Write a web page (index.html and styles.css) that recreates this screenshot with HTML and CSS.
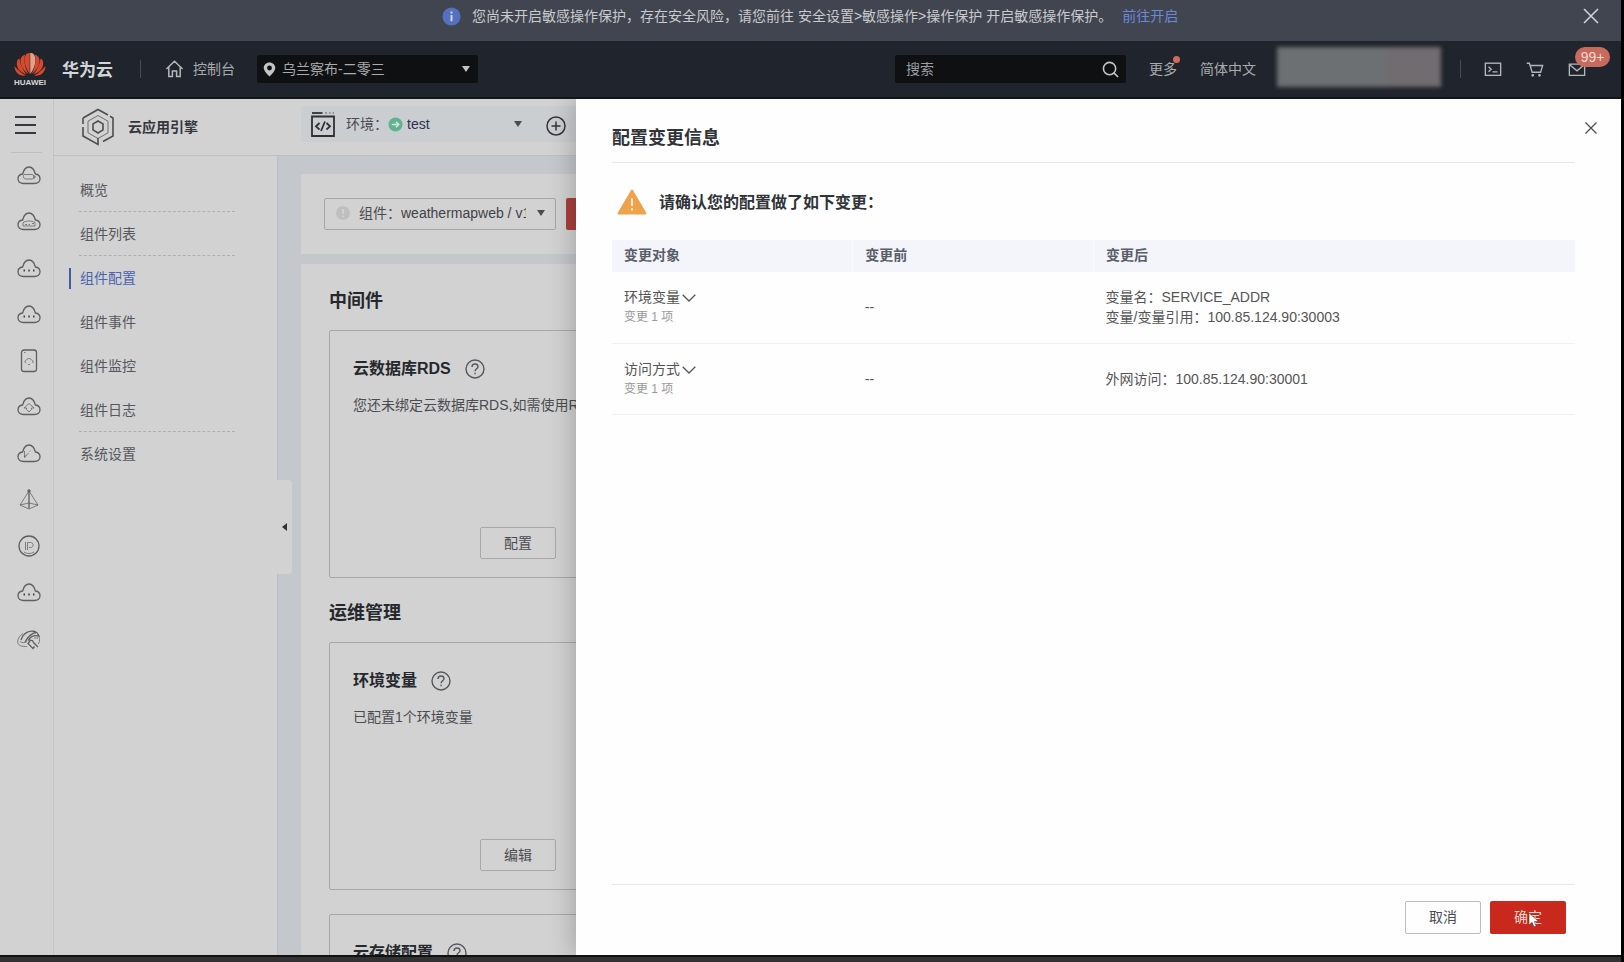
FILE: index.html
```html
<!DOCTYPE html>
<html lang="zh-CN">
<head>
<meta charset="utf-8">
<title>云应用引擎</title>
<link rel="stylesheet" href="styles.css">
</head>
<body>
<svg class="defs" aria-hidden="true">
  <symbol id="cloud" viewBox="0 0 26 22"><path d="M7.5 18.5h11c3.2 0 5.5-2 5.5-4.7 0-2.600-1.900-4.500-4.600-4.800C18.500 5.200 16.600 2 13 2S7.500 5.200 6.600 9C3.900 9.300 2 11.200 2 13.800c0 2.700 2.300 4.700 5.500 4.700z"/></symbol>
  <symbol id="help" viewBox="0 0 20 20"><circle cx="10" cy="10" r="9"/><path d="M7 8c0-1.900 1.300-3 3-3s3 1.100 3 2.700c0 2-2.900 2.200-2.900 4.500M10.100 13.700v1.600"/></symbol>
</svg>
<div class="page">
  <div class="notice">
    <svg class="notice-icon" viewBox="0 0 20 20"><circle cx="10" cy="10" r="9.500" fill="#5670c0"/><path d="M10 8.500v6.500M10 4.700v2.100" stroke="#d5daea" stroke-width="2"/></svg>
    <span>您尚未开启敏感操作保护，存在安全风险，请您前往 安全设置&gt;敏感操作&gt;操作保护 开启敏感操作保护。</span>
    <a href="#">前往开启</a>
    <button class="notice-close" aria-label="关闭提示"><svg viewBox="0 0 16 16"><path d="M1 1l14 14M15 1L1 15"/></svg></button>
  </div>

  <header class="topbar">
    <svg class="logo" viewBox="0 0 32 34">
      <g fill="#d5492f">
        <path d="M15.700 22C11 16 9 7 12 2.500 13.500.8 15.500.8 15.800 1z"/>
        <path d="M16.300 22C21 16 23 7 20 2.500 18.500.8 16.500.8 16.200 1z" fill="#e3a08a"/>
        <path d="M14.500 22C8 18 4.500 10 7.500 5 9 3.200 10.500 3 11 3c-1.500 7 .5 14 3.500 19z"/>
        <path d="M17.500 22c6.500-4 10-12 7-17C23 3.200 21.500 3 21 3c1.500 7-.5 14-3.500 19z"/>
        <path d="M13 22.500C5.500 20.500 1 14.500 3.500 8c.8-1 1.500-1.300 2-1.500C6 12.500 9 18.500 13 22.500z"/>
        <path d="M19 22.500c7.500-2 12-8 9.500-14.500-.8-1-1.500-1.300-2-1.500-.5 6-3.500 12-7.500 16z"/>
        <path d="M12 23.500C5.500 24.500.5 20.500.5 14c3 3.500 7 7.500 11.500 9.500z"/>
        <path d="M20 23.500c6.500 1 11.500-3 11.500-9.500-3 3.500-7 7.500-11.500 9.500z"/>
      </g>
      <text x="16" y="33" text-anchor="middle" class="logo-word">HUAWEI</text>
    </svg>
    <span class="brand">华为云</span>
    <span class="bar bar-brand"></span>
    <a class="console" href="#">
      <svg viewBox="0 0 20 20"><path d="M1.500 10L10 1.800l8.500 8.200M4 8v10h3.800v-6h4.400v6H16V8"/></svg>控制台
    </a>
    <div class="region">
      <svg class="pin" viewBox="0 0 14 16"><path fill-rule="evenodd" d="M7 .5C3.400.5.800 3.100.800 6.400.800 10 7 15.500 7 15.500S13.200 10 13.200 6.400C13.200 3.100 10.600.5 7 .5zM7 3.800a2.600 2.600 0 1 1 0 5.200 2.600 2.600 0 0 1 0-5.200z"/></svg>
      <select aria-label="区域"><option>乌兰察布-二零三</option></select>
      <span class="caret"></span>
    </div>
    <div class="search">
      <input type="text" placeholder="搜索" aria-label="搜索">
      <button aria-label="搜索"><svg viewBox="0 0 18 18"><circle cx="8" cy="8" r="6.500"/><path d="M12.600 12.600L17 17"/></svg></button>
    </div>
    <a class="more" href="#">更多<span class="dot"></span></a>
    <a class="lang" href="#">简体中文</a>
    <span class="account"></span>
    <span class="bar bar-tools"></span>
    <button class="tool" aria-label="命令行"><svg viewBox="0 0 20 18"><rect x="1.500" y="2" width="17" height="13.500"/><path d="M5 6l3 2.700-3 2.700M9.500 11.700H15"/></svg></button>
    <button class="tool" aria-label="购物车"><svg viewBox="0 0 20 18"><path d="M.8 2h3l3 10h9.400l2.300-7.500H4.600"/><circle cx="7.500" cy="15.500" r=".8"/><circle cx="15" cy="15.500" r=".8"/></svg></button>
    <button class="tool" aria-label="消息"><svg viewBox="0 0 20 18"><path d="M1.500 3h17v12.500h-17zM1.500 3.500l8.500 7 8.500-7"/></svg><span class="badge">99+</span></button>
  </header>

  <div class="body">
    <nav class="rail" aria-label="服务">
      <button class="menu" aria-label="菜单"><i></i><i></i><i></i></button>
      <div class="rail-list">
        <svg viewBox="0 0 26 22"><use href="#cloud"/><path class="thin" d="M8 9.500h8c2.500 0 2.500 4.500 0 4.500H9.500C7 14 7 9.500 8 9.500zM17 11h2v2h-2"/></svg>
        <svg viewBox="0 0 26 22"><use href="#cloud"/><path class="thin" d="M7 15v-3.500c3-2 9-2 12 0V15zM9 13.500h2M12.500 13.500h1.500M16 12.500h2"/></svg>
        <svg viewBox="0 0 26 22"><use href="#cloud"/><path class="dots" d="M7.500 12.500h1.500M12.300 12.500h1.500M17 12.500h1.500"/></svg>
        <svg viewBox="0 0 26 22"><use href="#cloud"/><path class="dots" d="M7.500 12.500h1.500M12.300 12.500h1.500M17 12.500h1.500"/></svg>
        <svg viewBox="0 0 26 22"><rect x="5.500" y="0" width="15" height="21.500" rx="2.500"/><path class="thin" d="M9.500 13c-1.500-2 .5-3 1-3 1-2 4-2 5 0 1 0 2.500 1.500 1 3M12 14.500h2M8 2.500h1.500"/></svg>
        <svg viewBox="0 0 26 22"><use href="#cloud"/><path class="thin" d="M13 7.500l5 4.500h-2.500v1.500L13 16l-2.500-2.500V12H8z"/></svg>
        <svg viewBox="0 0 26 22"><use href="#cloud"/><path class="thin" d="M8.500 8v6.500l4-4.500M13.500 8.500l1-1M8.500 14.500l1-2"/></svg>
        <svg viewBox="0 0 26 22"><path class="thin" d="M13 2L4 16l9 4 9-4zM4 16l9-2 9 2"/><path d="M13 2v17.500"/><circle cx="13" cy="2" r="1"/></svg>
        <svg viewBox="0 0 26 22"><circle cx="13" cy="11" r="10"/><path class="thin" d="M9.500 7v8M11.500 15V7.500h3c3.500 0 3.500 5 0 5H13M8 17c3 2 7 2 10 0"/></svg>
        <svg viewBox="0 0 26 22"><use href="#cloud"/><path class="dots" d="M7.500 12.500h1.500M12.300 12.500h1.500M17 12.500h1.500"/></svg>
        <svg viewBox="0 0 26 22"><path d="M5 12C7 5 13 2 19 3.500c3 1 3.500 3.500 4 4.500-4-1-8 0-10.500 4l4 .5 1 2 4.500 4.500M9 14c3-5 7-9 11-9.500M14 13l-2 2.500 5 5 1.500-2"/><path class="thin" d="M7 5.500C3 8 1 12 2 15.500c1.500 3 6 3 9 3M23 8.500c1 4 .5 6-1 7.500M4 13.500c2 1.500 5 1.500 7 0M18 10h4"/></svg>
      </div>
    </nav>

    <div class="workspace">
      <div class="titlebar">
        <svg class="engine" viewBox="0 0 34 38">
          <path d="M2 10l15-8.500 10 5.500M2 10v6M2 19v9l15 8.500V30M22 33.500l10-5.500V10l-3-1.700"/>
          <path class="thin" d="M17 7.500l10 5.700v11.600l-10 5.700-10-5.700V13.200z"/>
          <path d="M17 13l5 2.900v6L17 25l-5-3.100v-6z"/>
        </svg>
        <span class="product">云应用引擎</span>
        <div class="env">
          <svg class="env-icon" viewBox="0 0 24 26"><path d="M1 5.500h22V25H1z"/><path d="M1 2h10.500" /><path class="thin" d="M14 2h2M18 2h1.500M21.500 2H23"/><path d="M8.500 12L5 15.300l3.500 3.200M15.500 12l3.500 3.300-3.500 3.200M14 10.500l-4 9.500"/></svg>
          <label for="env">环境：</label>
          <svg class="ok" viewBox="0 0 16 16"><circle cx="8" cy="8" r="7.500" fill="#5fb391"/><path d="M4 8h7.500M8.500 5l3 3-3 3" stroke="#d7e8e0" fill="none" stroke-width="1.500"/></svg>
          <select id="env"><option>test</option></select>
          <span class="caret"></span>
          <button class="add" aria-label="新建环境"><svg viewBox="0 0 20 20"><circle cx="10" cy="10" r="9"/><path d="M10 5.500v9M5.500 10h9"/></svg></button>
        </div>
      </div>

      <div class="columns">
        <nav class="side" aria-label="云应用引擎">
          <a href="#">概览</a>
          <hr>
          <a href="#">组件列表</a>
          <hr>
          <a href="#" class="active">组件配置</a>
          <a href="#">组件事件</a>
          <a href="#">组件监控</a>
          <a href="#">组件日志</a>
          <hr>
          <a href="#">系统设置</a>
          <button class="fold" aria-label="收起"></button>
        </nav>

        <main class="content">
          <section class="panel picker-panel">
            <div class="picker">
              <svg class="idle" viewBox="0 0 14 14"><circle cx="7" cy="7" r="7" fill="#bfbfbf"/><path d="M7 3v5M7 9.500v1.500" stroke="#d8d8d8" stroke-width="1.500"/></svg>
              <label for="component">组件：</label>
              <select id="component"><option>weathermapweb / v1</option></select>
              <span class="caret"></span>
            </div>
            <button class="primary apply" aria-label="生效配置"></button>
          </section>

          <section class="panel config-panel">
            <h2>中间件</h2>
            <article class="box">
              <h3>云数据库RDS <svg class="help"><use href="#help"/></svg></h3>
              <p>您还未绑定云数据库RDS,如需使用RDS,请</p>
              <button class="ghost">配置</button>
            </article>
            <h2>运维管理</h2>
            <article class="box">
              <h3>环境变量 <svg class="help"><use href="#help"/></svg></h3>
              <p>已配置1个环境变量</p>
              <button class="ghost">编辑</button>
            </article>
            <article class="box">
              <h3>云存储配置 <svg class="help"><use href="#help"/></svg></h3>
            </article>
          </section>
        </main>
      </div>
    </div>

    <section class="drawer" role="dialog" aria-labelledby="drawer-title">
      <header class="drawer-head">
        <h1 id="drawer-title">配置变更信息</h1>
        <button class="drawer-close" aria-label="关闭"><svg viewBox="0 0 12 12"><path d="M.5.5l11 11M11.500.5L.5 11.500"/></svg></button>
      </header>
      <div class="drawer-body">
        <div class="warning">
          <svg viewBox="0 0 30 26"><path d="M15 1.500L28.500 24.500H1.500z" fill="#eea24a" stroke="#eea24a" stroke-width="2" stroke-linejoin="round"/><path d="M15 9v8M15 19v2.500" stroke="#fbe9cf" stroke-width="2"/></svg>
          <strong>请确认您的配置做了如下变更：</strong>
        </div>
        <table>
          <thead><tr><th scope="col">变更对象</th><th scope="col">变更前</th><th scope="col">变更后</th></tr></thead>
          <tbody>
            <tr>
              <td><button class="expand">环境变量<svg viewBox="0 0 14 8"><path d="M.7.8L7 7l6.300-6.200"/></svg></button><small>变更 1 项</small></td>
              <td>--</td>
              <td>变量名：SERVICE_ADDR<br>变量/变量引用：100.85.124.90:30003</td>
            </tr>
            <tr>
              <td><button class="expand">访问方式<svg viewBox="0 0 14 8"><path d="M.7.8L7 7l6.300-6.200"/></svg></button><small>变更 1 项</small></td>
              <td>--</td>
              <td>外网访问：100.85.124.90:30001</td>
            </tr>
          </tbody>
        </table>
      </div>
      <footer class="drawer-foot">
        <button class="cancel">取消</button>
        <button class="primary confirm">确定
          <svg class="pointer" viewBox="0 0 12 16"><path d="M1 1v12l3-2.700 2 4.700 2.200-1-2-4.500H10.500z"/></svg>
        </button>
      </footer>
    </section>
  </div>
  <div class="dock"></div>
</div>
</body>
</html>
```
FILE: styles.css
```css
* { box-sizing: border-box; }

body {
  margin: 0;
  font: 14px/20px "Liberation Sans", "Noto Sans CJK SC", sans-serif;
  color: #4a4c50;
  background: #000;
}

button, input, select {
  font: inherit;
  color: inherit;
  border: 0;
  padding: 0;
  margin: 0;
  background: none;
}
select { appearance: none; }
a { color: inherit; text-decoration: none; }
h1, h2, h3, p { margin: 0; }
svg { display: block; flex: none; fill: none; stroke: none; }
.defs { position: absolute; width: 0; height: 0; }

.page {
  height: 100vh;
  display: flex;
  flex-direction: column;
  border-right: 3px solid #000;
  overflow: hidden;
}

/* notice strip */
.notice {
  position: relative;
  flex: none;
  height: 41px;
  padding: 6px 0 15px 442px;
  display: flex;
  align-items: center;
  background: #41454f;
  color: #c9cbd0;
  white-space: nowrap;
}
.notice-icon { width: 19px; height: 19px; margin-right: 11px; }
.notice a { margin-left: 10px; color: #6c88d8; }
.notice-close { margin: 0 22px 0 auto; }
.notice-close svg { width: 16px; height: 16px; stroke: #d3d5d9; stroke-width: 1.500; }

/* top bar */
.topbar {
  flex: none;
  height: 58px;
  display: flex;
  align-items: center;
  padding: 0 35px 0 14px;
  background: #20242c;
  border-bottom: 2px solid #131519;
  color: #a9abae;
  white-space: nowrap;
}
.logo { width: 32px; height: 34px; }
.logo-word { font: bold 8px "Liberation Sans", sans-serif; fill: #d8d8d8; }
.brand { margin-left: 16px; padding-top: 3px; font-size: 17px; font-weight: bold; color: #d4d5d7; }
.bar { width: 1px; height: 18px; background: #474b53; }
.bar-brand { margin: 0 24px 0 27px; }
.console { display: flex; align-items: center; gap: 9px; }
.console svg { width: 19px; height: 20px; stroke: #b4b6b9; stroke-width: 1.600; }
.region {
  display: flex;
  align-items: center;
  width: 221px;
  height: 28px;
  margin-left: 22px;
  padding: 0 8px 0 6px;
  background: #0f1011;
  border-radius: 2px;
}
.pin { width: 13px; height: 15px; margin-right: 6px; fill: #c3c4c6; }
.region select { flex: 1; }
.caret {
  flex: none;
  border: 4px solid transparent;
  border-top: 6px solid #4a4c50;
  border-bottom: 0;
}
.region .caret { border-top-color: #c3c4c6; }
.search {
  display: flex;
  align-items: center;
  width: 231px;
  height: 28px;
  margin-left: auto;
  padding: 0 7px 0 11px;
  background: #0f1011;
  border-radius: 2px;
}
.search input { flex: 1; min-width: 0; }
.search input::placeholder { color: #9c9ea1; opacity: 1; }
.search svg { width: 17px; height: 17px; stroke: #c3c4c6; stroke-width: 1.700; }
.more { position: relative; margin-left: 23px; }
.dot {
  position: absolute;
  top: -3px;
  right: -3px;
  width: 7px;
  height: 7px;
  border-radius: 50%;
  background: #cf6a5c;
}
.lang { margin-left: 23px; }
.account {
  width: 164px;
  height: 40px;
  margin: 0 19px 4px 21px;
  background: linear-gradient(90deg, #6d7072 66%, #706c70 67%);
  filter: blur(2px);
}
.tool { position: relative; margin-left: 24px; }
.bar-tools + .tool { margin-left: 23px; }
.tool svg { width: 18px; height: 17px; stroke: #b4b6b9; stroke-width: 1.500; }
.badge {
  position: absolute;
  left: 7px;
  top: -14px;
  width: 35px;
  height: 20px;
  border-radius: 10px;
  background: #c96b5c;
  color: #f0d8d3;
  font-size: 14px;
  line-height: 20px;
  text-align: center;
}

/* body */
.body { position: relative; flex: 1; min-height: 0; display: flex; background: #d2d2d2; }

.rail {
  flex: none;
  width: 54px;
  border-right: 1px solid #c4c4c4;
  padding: 0 11px;
}
.menu {
  display: flex;
  flex-direction: column;
  justify-content: center;
  gap: 6px;
  width: 31px;
  height: 54px;
  padding: 0 5px 2px 4px;
  border-bottom: 1px solid #c0c0c0;
}
.menu i { width: 21px; height: 2px; background: #37393c; }
.rail-list {
  display: flex;
  flex-direction: column;
  align-items: center;
  justify-content: space-between;
  height: 485px;
  width: 36px;
  margin-top: 12px;
}
.rail-list svg { width: 26px; height: 22px; stroke: #5e5f61; stroke-width: 1.300; overflow: visible; }
.rail-list .thin, .engine .thin, .env-icon .thin { stroke-width: 1; opacity: .75; }
.rail-list .dots { stroke-width: 2; stroke: #3f4143; }

.workspace { flex: 1; min-width: 0; display: flex; flex-direction: column; }
.titlebar {
  flex: none;
  display: flex;
  align-items: center;
  height: 57px;
  padding-left: 27px;
  border-bottom: 1px solid #bfbfbf;
}
.engine { width: 34px; height: 38px; stroke: #4c4e51; stroke-width: 1.600; }
.product { width: 173px; margin-left: 13px; font-weight: bold; color: #33363b; }
.env {
  display: flex;
  align-items: center;
  width: 275px;
  height: 36px;
  margin-bottom: 6px;
  padding-left: 10px;
  background: #cbced1;
}
.env-icon { width: 24px; height: 26px; margin-right: 11px; stroke: #2f3135; stroke-width: 1.800; }
.ok { width: 15px; height: 15px; }
.env select { width: 107px; margin-left: 4px; color: #2c3350; }
.add { margin: 4px 0 0 24px; }
.add svg { width: 20px; height: 20px; stroke: #33353b; stroke-width: 1.500; }

.columns { flex: 1; min-height: 0; display: flex; }
.side {
  position: relative;
  flex: none;
  display: flex;
  flex-direction: column;
  width: 224px;
  padding: 12px 42px 0 25px;
  border-right: 1px solid #bcbfc1;
}
.side a {
  height: 44px;
  margin-left: -10px;
  padding-left: 11px;
  line-height: 44px;
  color: #55585d;
}
.side hr {
  width: 100%;
  height: 0;
  margin: -1px 0 0;
  border: 0;
  border-top: 1px dashed #b0b0b0;
}
.side .active { color: #4a64b0; background: linear-gradient(#4059a8, #4059a8) 0 12px / 2px 21px no-repeat; }
.fold {
  position: absolute;
  left: 223px;
  top: 324px;
  width: 15px;
  height: 94px;
  background: #d2d2d2;
  border-radius: 0 4px 4px 0;
}
.fold::after {
  content: "";
  display: block;
  width: 0;
  margin-left: 5px;
  border: 4px solid transparent;
  border-right: 5px solid #333;
  border-left: 0;
}

.content {
  flex: 1;
  min-width: 0;
  display: flex;
  flex-direction: column;
  gap: 10px;
  padding: 18px 0 0 23px;
  background: #c4c8cc;
  overflow: hidden;
}
.panel { background: #d2d2d2; }
.picker-panel { flex: none; display: flex; gap: 10px; height: 80px; padding: 24px 23px; }
.picker {
  display: flex;
  align-items: center;
  width: 232px;
  height: 32px;
  padding: 0 0 3px 11px;
  border: 1px solid #a6a6a6;
  border-radius: 2px;
}
.idle { width: 14px; height: 14px; margin-right: 9px; }
.picker select { width: 125px; margin-right: 11px; color: #3f4247; }
.primary { background: #c9281c; color: #f4d8d4; border-radius: 2px; }
.apply { width: 90px; height: 32px; background: #a8403b; }

.config-panel { flex: 1; min-height: 0; padding: 22px 28px 0; overflow: hidden; }
h2 { font-size: 18px; line-height: 30px; color: #25282d; }
.box + h2 { margin-top: 20px; }
.box {
  display: flex;
  flex-direction: column;
  align-items: center;
  width: 378px;
  height: 248px;
  margin-top: 14px;
  padding: 26px 23px 18px;
  border: 1px solid #a8a8a8;
  border-radius: 2px;
}
.box + .box { margin-top: 24px; }
h3 { display: flex; align-items: center; gap: 14px; width: 100%; font-size: 16px; line-height: 24px; color: #25282d; }
.help { width: 20px; height: 20px; stroke: #55585c; stroke-width: 1.400; }
.box p { width: 100%; margin-top: 14px; white-space: nowrap; }
.ghost { width: 76px; height: 32px; margin-top: auto; border: 1px solid #a8a8a8; border-radius: 2px; }

/* drawer */
.drawer {
  position: absolute;
  left: 576px;
  right: 0;
  top: 0;
  bottom: 0;
  display: flex;
  flex-direction: column;
  padding: 0 46px 0 36px;
  background: #fefefe;
  box-shadow: -2px 0 24px rgba(0, 0, 0, .24);
  clip-path: inset(0 0 0 -40px);
}
.drawer-head { flex: none; height: 64px; padding-top: 25px; border-bottom: 1px solid #e8e8e8; }
h1 { font-size: 18px; line-height: 28px; font-weight: bold; color: #303338; }
.drawer-close { position: absolute; top: 23px; right: 24px; }
.drawer-close svg { width: 12px; height: 12px; stroke: #4c4f54; stroke-width: 1.300; }
.drawer-body { flex: 1; }
.warning { display: flex; align-items: center; gap: 12px; height: 77px; padding-left: 5px; }
.warning svg { width: 30px; height: 26px; }
.warning strong { padding-top: 2px; font-size: 16px; font-weight: bold; color: #303338; }
table { width: 100%; border-collapse: collapse; table-layout: fixed; }
th, td { padding: 0 12px; text-align: left; }
th:nth-child(-n+2) { width: 25%; }
th { height: 32px; padding-bottom: 2px; background: #f3f5fa; color: #595d69; font-weight: bold; }
th + th { border-left: 1px solid #f9fafc; }
td { height: 71px; border-bottom: 1px solid #f0f0f0; color: #555; }
.expand { display: flex; align-items: center; height: 20px; }
.expand svg { width: 14px; height: 8px; margin: 2px 0 0 2px; stroke: #555; stroke-width: 1.300; }
td small { display: block; font-size: 12px; color: #999; }
.drawer-foot {
  flex: none;
  display: flex;
  justify-content: flex-end;
  gap: 9px;
  height: 71px;
  padding: 16px 9px 0;
  border-top: 1px solid #e8e8e8;
}
.drawer-foot button { position: relative; width: 76px; height: 33px; padding-bottom: 2px; }
.drawer-foot .cancel { border: 1px solid #bdbdbd; border-radius: 2px; }
.pointer { position: absolute; left: 38px; top: 11px; width: 12px; height: 16px; fill: #fff; stroke: #4d1a16; stroke-width: .5; }

.dock { flex: none; height: 7px; background: #333; border-top: 2px solid #111; }
```
